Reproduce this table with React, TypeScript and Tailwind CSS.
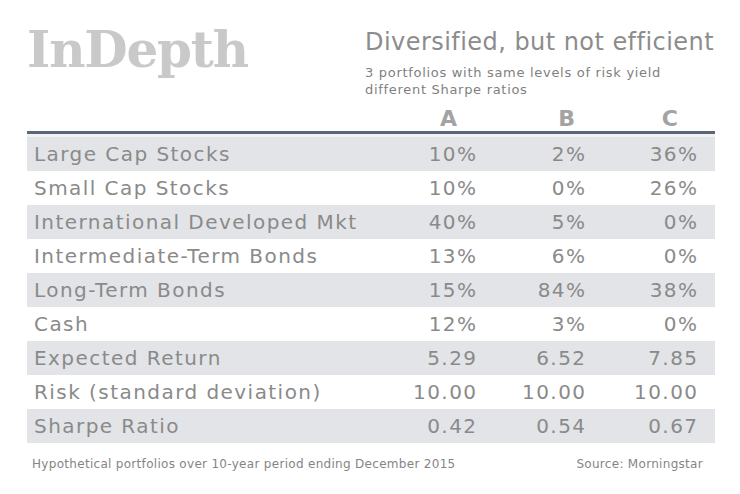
const rows = [
  { label: 'Large Cap Stocks', a: '10%', b: '2%', c: '36%' },
  { label: 'Small Cap Stocks', a: '10%', b: '0%', c: '26%' },
  { label: 'International Developed Mkt', a: '40%', b: '5%', c: '0%' },
  { label: 'Intermediate-Term Bonds', a: '13%', b: '6%', c: '0%' },
  { label: 'Long-Term Bonds', a: '15%', b: '84%', c: '38%' },
  { label: 'Cash', a: '12%', b: '3%', c: '0%' },
  { label: 'Expected Return', a: '5.29', b: '6.52', c: '7.85' },
  { label: 'Risk (standard deviation)', a: '10.00', b: '10.00', c: '10.00' },
  { label: 'Sharpe Ratio', a: '0.42', b: '0.54', c: '0.67' },
]

const sans = "font-['DejaVu_Sans',Verdana,sans-serif]"

export default function App() {
  return (
    <div className={`w-[740px] h-[494px] bg-white ${sans} flex flex-col pl-[27px] pr-[25px]`}>
      {/* header */}
      <div className="flex h-[105px]">
        <div className="w-[338px] pt-[25px]">
          <span className="font-['DejaVu_Serif',serif] font-bold text-[50px] leading-none tracking-[-1.2px] text-[#c9c9c9]">
            InDepth
          </span>
        </div>
        <div className="pt-[28px]">
          <div className="text-[24px] leading-[28px] tracking-[0.45px] text-[#8c8c8c]">Diversified, but not efficient</div>
          <div className="mt-[8px] text-[13px] leading-[17px] tracking-[0.7px] text-[#7f7f7f]">
            3 portfolios with same levels of risk yield
            <br />
            different Sharpe ratios
          </div>
        </div>
      </div>

      {/* column heads */}
      <div className="grid grid-cols-[340px_109px_109px_112px] h-[26px] pt-[3px] items-start text-[22px] font-bold text-[#a3a3a3] leading-none">
        <div />
        <div className="text-right pr-[19px]">A</div>
        <div className="text-right pr-[10px]">B</div>
        <div className="text-right pr-[19px]">C</div>
      </div>
      <div className="h-[3px] bg-[#5d6778]" />
      <div className="h-[3px] bg-[#f1f2f4]" />

      {/* rows */}
      <div className="flex flex-col">
        {rows.map((r, i) => (
          <div
            key={r.label}
            className={`grid grid-cols-[340px_109px_109px_112px] h-[34px] items-center text-[20px] leading-none tracking-[1.45px] text-[#8a8a8a] ${
              i % 2 === 0 ? 'bg-[#e2e4e7]' : 'bg-white'
            }`}
          >
            <div className="pl-[7px] whitespace-nowrap">{r.label}</div>
            <div className="text-right -mr-[1.5px]">{r.a}</div>
            <div className="text-right -mr-[1.5px]">{r.b}</div>
            <div className="text-right -mr-[1.5px]">{r.c}</div>
          </div>
        ))}
      </div>

      {/* footer */}
      <div className="flex justify-between pl-[5px] pr-[12px] pt-[13px] text-[12px] leading-[16px] tracking-[0.3px] text-[#858585]">
        <span>Hypothetical portfolios over 10-year period ending December 2015</span>
        <span>Source: Morningstar</span>
      </div>
    </div>
  )
}
